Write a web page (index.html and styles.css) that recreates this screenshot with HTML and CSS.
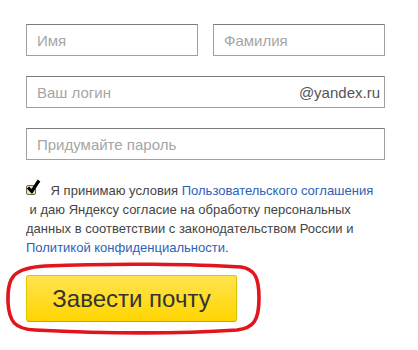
FILE: index.html
```html
<!DOCTYPE html>
<html lang="ru">
<head>
<meta charset="utf-8">
<link rel="stylesheet" href="styles.css">
</head>
<body>
<form class="form">
  <div class="row">
    <div class="field half"><span class="ph">Имя</span></div>
    <div class="field half"><span class="ph">Фамилия</span></div>
  </div>
  <div class="field login"><span class="ph">Ваш логин</span><span class="domain">@yandex.ru</span></div>
  <div class="field"><span class="ph">Придумайте пароль</span></div>
  <p class="terms">
    <span class="check"><svg width="15" height="17" viewBox="0 0 15 17"><path d="M2 9.5 L5.8 13.5 L13 2.5" fill="none" stroke="#000" stroke-width="3.2" stroke-linejoin="miter"/></svg></span>
    Я принимаю условия <a href="#">Пользовательского соглашения</a><br>
    &nbsp;и даю Яндексу согласие на обработку персональных данных в соответствии с законодательством России и <a href="#">Политикой конфиденциальности</a>.
  </p>
  <div class="submit-wrap">
    <svg class="circle" width="256" height="72" viewBox="0 0 256 72"><path d="M40 4 C110 1 190 2 236 5 C250 7 254 16 254 36 C254 58 249 66 232 68 C170 72 90 71 30 68 C10 67 4 60 3 40 C2 15 8 6 40 4 Z" fill="none" stroke="#e3141c" stroke-width="3.6"/></svg>
    <button type="button" class="submit">Завести почту</button>
  </div>
</form>
</body>
</html>
```
FILE: styles.css
```css
html, body { margin: 0; padding: 0; background: #fff; }
body { font-family: "Liberation Sans", Arial, sans-serif; min-height: 350px; }
.form { width: 359px; padding: 24px 0 27px 26px; }
.row { display: flex; justify-content: space-between; margin-bottom: 20px; }
.field {
  box-sizing: border-box;
  height: 32px;
  border: 1px solid #a0a0a0;
  border-top-color: #7c7c7c;
  display: flex;
  align-items: center;
  justify-content: space-between;
  padding: 0 4px 0 10px;
  margin-bottom: 20px;
}
.half { width: 172px; margin-bottom: 0; }
.ph { color: #a6a6a6; font-size: 15px; }
.domain { color: #555; font-size: 15px; }
.terms {
  margin: 21px 0 0 0;
  font-size: 13px;
  line-height: 19px;
  color: #444;
}
.terms a { color: #2b62b6; text-decoration: none; }
.check {
  position: relative;
  display: inline-block;
  box-sizing: border-box;
  width: 10px; height: 10px;
  border: 1px solid #6e6840;
  background: #f0e4b5;
  border-radius: 2px;
  margin-right: 11px;
  vertical-align: 0;
}
.check svg { position: absolute; left: -1px; top: -8px; }
.submit-wrap { position: relative; margin-top: 18px; height: 47px; }
.submit {
  display: block;
  position: relative;
  width: 211px; height: 47px;
  border: 1px solid #e2c300;
  border-bottom-color: #c6a800;
  border-radius: 3px;
  background: linear-gradient(#ffe44f, #ffd500);
  font-family: "Liberation Sans", Arial, sans-serif;
  font-size: 24px;
  color: #333;
  padding: 0;
}
.circle { position: absolute; left: -21px; top: -13px; z-index: 1; overflow: visible; display: block; }
```
